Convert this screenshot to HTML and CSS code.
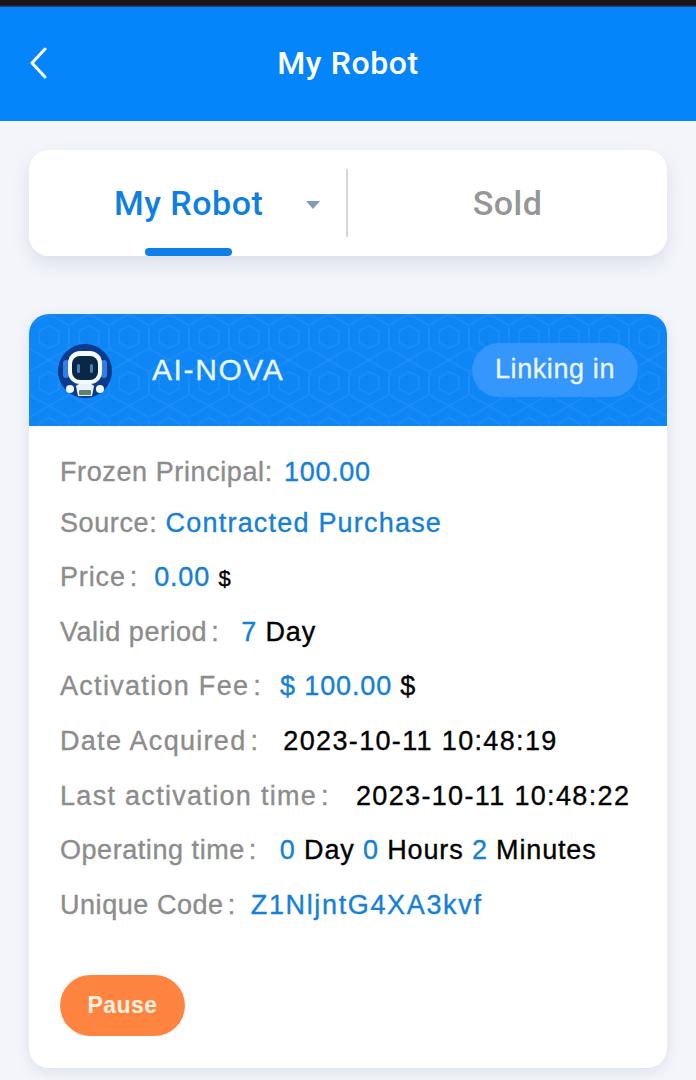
FILE: index.html
```html
<!DOCTYPE html>
<html lang="en">
<head>
<meta charset="utf-8">
<title>My Robot</title>
<link rel="stylesheet" href="styles.css">
</head>
<body>
<div class="statusbar"></div>
<header class="topbar">
  <svg class="back" width="20" height="32" viewBox="0 0 20 32"><path d="M16 2 3 16l13 14" fill="none" stroke="#fff" stroke-width="3" stroke-linecap="round" stroke-linejoin="round"/></svg>
  <h1 class="title">My Robot</h1>
</header>
<main class="content">
  <nav class="tabs">
    <div class="tab tab-active">
      <span>My Robot</span>
      <svg class="caret" width="16" height="10" viewBox="0 0 16 10"><path d="M1 1h14L8 9z" fill="#7f9dbb"/></svg>
      <i class="underline"></i>
    </div>
    <div class="tab tab-idle"><span>Sold</span></div>
  </nav>
  <section class="card">
    <div class="card-head">
      <svg class="pattern" width="100%" height="100%"><defs><pattern id="hex" width="40" height="46" patternUnits="userSpaceOnUse"><path d="M20 0 40 11.500V34.500L20 46 0 34.500V11.500Z M20 11.500 30 17.250V28.750L20 34.500 10 28.750V17.250Z" fill="none" stroke="#3a9bff" stroke-opacity=".3" stroke-width="1.500"/></pattern></defs><rect width="100%" height="100%" fill="url(#hex)"/></svg>
      <svg class="avatar" width="54" height="54" viewBox="0 0 54 54">
        <circle cx="27" cy="27" r="27" fill="#0c3a8c"/>
        <rect x="5" y="16" width="6" height="18" rx="3" fill="#2f7fe6"/>
        <rect x="43" y="16" width="6" height="18" rx="3" fill="#2f7fe6"/>
        <path d="M18 42c3-4 15-4 18 0l-2 10H20z" fill="#eaf3fb"/>
        <circle cx="12" cy="45" r="4" fill="#f2f7fc"/>
        <circle cx="42" cy="45" r="4" fill="#f2f7fc"/>
        <rect x="21" y="46" width="12" height="5" rx="1" fill="#5c7f76"/>
        <rect x="10" y="7" width="34" height="33" rx="12" fill="#f4f9fd"/>
        <rect x="14" y="12" width="26" height="24" rx="8" fill="#0a2746"/>
        <rect x="19" y="20" width="3" height="9" rx="1.500" fill="#3f84b8"/>
        <rect x="32" y="20" width="3" height="9" rx="1.500" fill="#3f84b8"/>
      </svg>
      <span class="name">AI-NOVA</span>
      <span class="status">Linking in</span>
    </div>
    <div class="card-body">
      <p class="row row-first"><span class="label">Frozen Principal:</span> <span class="blue gap-first">100.00</span></p>
      <p class="row row-second"><span class="label">Source:</span> <span class="blue source">Contracted Purchase</span></p>
      <p class="row"><span class="label">Price<i class="colon">:</i></span><span class="blue gap-price">0.00</span> <span class="small">$</span></p>
      <p class="row"><span class="label label-tight">Valid period<i class="colon">:</i></span><span class="blue gap-valid">7</span> Day</p>
      <p class="row"><span class="label label-wide">Activation Fee<i class="colon">:</i></span><span class="blue gap-fee">$ 100.00</span> $</p>
      <p class="row"><span class="label label-wide">Date Acquired<i class="colon">:</i></span><span class="gap-date wide">2023-10-11 10:48:19</span></p>
      <p class="row"><span class="label label-wide">Last activation time<i class="colon">:</i></span><span class="gap-last wide">2023-10-11 10:48:22</span></p>
      <p class="row"><span class="label label-tight">Operating time<i class="colon">:</i></span><span class="blue gap-op">0</span> Day <span class="blue">0</span> Hours <span class="blue">2</span> Minutes</p>
      <p class="row"><span class="label label-tight">Unique Code<i class="colon">:</i></span><span class="blue gap-code wider">Z1NljntG4XA3kvf</span></p>
      <button class="pause" type="button">Pause</button>
    </div>
  </section>
</main>
</body>
</html>
```
FILE: styles.css
```css
* { box-sizing: border-box; }
html, body { margin: 0; padding: 0; }
body {
  width: 696px;
  height: 1080px;
  overflow: hidden;
  background: #f3f5fa;
  font-family: "Liberation Sans", Arial, sans-serif;
}
.statusbar { height: 7px; background: linear-gradient(#1c1518 70%, #2f4f78); }
.topbar {
  height: 114px;
  background: #0585fa;
  display: flex;
  align-items: center;
  justify-content: center;
  position: relative;
}
.back { position: absolute; left: 29px; top: 40px; }
.title {
  margin: -3px 0 0;
  color: #fff;
  font: 500 32px Roboto, sans-serif;
  letter-spacing: .6px;
}
.content { padding: 29px 29px 0; }
.tabs {
  height: 106px;
  background: #fff;
  border-radius: 20px;
  box-shadow: 0 8px 18px rgba(130, 145, 180, .22);
  display: flex;
  align-items: center;
}
.tab {
  height: 68px;
  display: flex;
  align-items: center;
  font: 500 34px Roboto, sans-serif;
  letter-spacing: .5px;
  position: relative;
}
.tab-active { width: 319px; color: #0f7fe0; border-right: 2px solid #d2d5da; padding-left: 85px; }
.tab-active span { margin-right: 43px; }
.tab-idle { flex: 1; color: #969696; justify-content: center; }
.caret { margin-top: 3px; margin-left: -1px; }
.underline {
  position: absolute;
  left: 116px;
  bottom: -19px;
  width: 87px;
  height: 8px;
  border-radius: 4px;
  background: #0e7fe8;
}
.card {
  margin-top: 58px;
  height: 754px;
  background: #fff;
  border-radius: 20px;
  overflow: hidden;
  box-shadow: 0 4px 14px rgba(130, 145, 180, .2);
}
.card-head {
  height: 112px;
  background: #0f86f5;
  position: relative;
  display: flex;
  align-items: center;
  padding: 0 29px;
}
.pattern { position: absolute; inset: 0; }
.avatar { position: relative; flex: none; margin-top: 1px; }
.name {
  position: relative;
  margin-left: 40px;
  color: #eaf7ff;
  font-size: 30px;
  letter-spacing: 1.600px;
  -webkit-text-stroke: .3px #eaf7ff;
}
.status {
  position: relative;
  margin-left: auto;
  height: 54px;
  padding: 0 23px;
  border-radius: 27px;
  background: #3596fb;
  color: #eaf7ff;
  font-size: 27px;
  line-height: 52px;
  letter-spacing: .6px;
  -webkit-text-stroke: .3px #eaf7ff;
}
.card-body { padding: 19px 31px 0; }
.row {
  margin: 0;
  height: 54.700px;
  line-height: 54.700px;
  font-size: 27px;
  letter-spacing: .85px;
  color: #000;
  white-space: nowrap;
  -webkit-text-stroke: .35px currentColor;
}
.row-first { height: 52px; line-height: 54px; letter-spacing: .7px; }
.row-second { height: 53px; line-height: 52px; }
.label { color: #8c8c8c; }
.label-wide { letter-spacing: 1.300px; }
.label-tight { letter-spacing: .55px; }
.colon { font-style: normal; margin-left: 4px; }
.row-first .label, .row-second .label { letter-spacing: .6px; }
.blue { color: #1480d8; }
.source { letter-spacing: 1.200px; }
.wide { letter-spacing: 1.350px; }
.wider { letter-spacing: 1.650px; }
.gap-first { margin-left: 3px; }
.gap-price { margin-left: 16px; }
.gap-valid { margin-left: 22px; }
.gap-fee { margin-left: 18px; }
.gap-date { margin-left: 24px; }
.gap-last { margin-left: 26px; }
.gap-op { margin-left: 23px; }
.gap-code { margin-left: 15px; }
.small { font-size: 22px; }
.pause {
  display: block;
  margin-top: 42px;
  width: 125px;
  height: 61px;
  border: 0;
  border-radius: 31px;
  background: #ff8440;
  color: #fff0e0;
  font: 700 23px "Liberation Sans", Arial, sans-serif;
  letter-spacing: .4px;
}
```
